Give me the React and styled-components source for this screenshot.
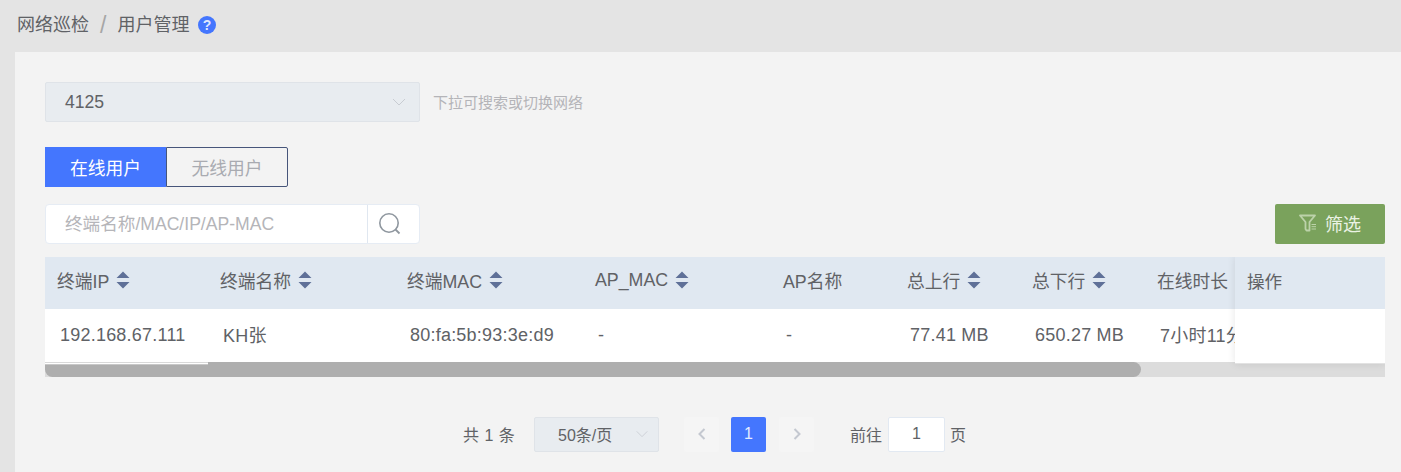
import React from "react";
import styled, { createGlobalStyle } from "styled-components";

const FONT = `"Liberation Sans", "Noto Sans CJK SC", sans-serif`;

const Global = createGlobalStyle`
  html, body { margin: 0; padding: 0; background: #e4e4e4; }
  body { font-family: ${FONT}; color: #606266; overflow: hidden; }
  * { box-sizing: border-box; }
`;

const Page = styled.div`
  width: 1401px;
  height: 472px;
  display: flex;
  flex-direction: column;
  overflow: hidden;
`;

const Crumbs = styled.header`
  height: 52px;
  flex: none;
  padding-left: 17px;
  padding-bottom: 7px;
  display: flex;
  align-items: center;
  font-size: 18px;
  color: #606266;
`;

const Slash = styled.span`
  margin: 5px 11px 0;
  font-size: 23px;
  line-height: 1;
  color: #a6a6a6;
  font-weight: 400;
`;

const HelpIcon = styled.svg`
  width: 18px;
  height: 18px;
  margin: 5px 0 0 9px;
`;

const Main = styled.main`
  flex: 1;
  margin-left: 15px;
  background: #f3f3f3;
  padding: 30px 16px 0 30px;
`;

const SelectRow = styled.div`
  display: flex;
  align-items: center;
  gap: 13px;
`;

const Select = styled.div`
  width: ${(p) => p.$w}px;
  height: ${(p) => p.$h}px;
  background: #e8ecf0;
  border: 1px solid #dfe3e8;
  border-radius: 2px;
  padding-left: ${(p) => p.$pad}px;
  padding-right: ${(p) => p.$right}px;
  display: flex;
  align-items: center;
  justify-content: space-between;
  font-size: ${(p) => p.$fs}px;
  color: #606266;
`;

const Hint = styled.span`
  font-size: 15px;
  padding-bottom: 2px;
  color: #b4b4b8;
`;

const Tabs = styled.div`
  display: flex;
  margin-top: 25px;
`;

const Tab = styled.div`
  width: ${(p) => (p.$active ? 121 : 122)}px;
  height: 40px;
  display: flex;
  align-items: center;
  justify-content: center;
  font-size: 17.8px;
  color: ${(p) => (p.$active ? "#ffffff" : "#a9abb1")};
  background: ${(p) => (p.$active ? "#4476fe" : "transparent")};
  border: ${(p) => (p.$active ? "none" : "1px solid #46557a")};
  border-radius: ${(p) => (p.$active ? "0" : "0 2px 2px 0")};
`;

const Toolbar = styled.div`
  margin-top: 17px;
  display: flex;
  justify-content: space-between;
  align-items: flex-start;
`;

const Search = styled.div`
  width: 375px;
  height: 40px;
  display: flex;
  background: #fff;
  border: 1px solid #e6ecf4;
  border-radius: 4px;
`;

const SearchText = styled.div`
  flex: 1;
  padding: 0 0 4px 19px;
  display: flex;
  align-items: center;
  font-size: 17.6px;
  color: #b5b5b9;
  border-right: 1px solid #e0e7f0;
`;

const SearchBtn = styled.div`
  width: 51px;
  padding-left: 11px;
  display: flex;
  align-items: center;
`;

const FilterBtn = styled.div`
  width: 110px;
  height: 40px;
  background: #7aa25c;
  border-radius: 2px;
  padding-bottom: 2px;
  display: flex;
  align-items: center;
  justify-content: center;
  gap: 8px;
  font-size: 18px;
  color: #eaf2e4;
`;

const TableWrap = styled.div`
  position: relative;
  margin-top: 13px;
  width: 1340px;
  height: 120px;
  overflow: hidden;
`;

const Row = styled.div`
  display: flex;
  width: 1340px;
  height: ${(p) => p.$h}px;
  background: ${(p) => p.$bg};
`;

const HeadCell = styled.div`
  flex: none;
  width: ${(p) => p.$w}px;
  padding: 0 0 6px 12px;
  display: flex;
  align-items: center;
  gap: 7px;
  font-size: 17.8px;
  color: #606266;
  white-space: nowrap;
  overflow: hidden;
`;

const BodyCell = styled.div`
  flex: none;
  width: ${(p) => p.$w}px;
  padding: 0 0 ${(p) => (p.$cjk ? 3 : 0)}px 15px;
  display: flex;
  align-items: center;
  font-size: 18px;
  letter-spacing: 0.22px;
  color: #606266;
  white-space: nowrap;
  overflow: hidden;
`;

const Scrollbar = styled.div`
  height: 15px;
  background: #dcdcdc;
`;

const Thumb = styled.div`
  width: 1096px;
  height: 15px;
  background: #aeaeae;
  border-radius: 0 8px 8px 8px;
`;

const FixedRight = styled.div`
  position: absolute;
  top: 0;
  right: 0;
  width: 150px;
  height: 107px;
  box-shadow: 0 0 8px rgba(0, 0, 0, 0.1);
  border-bottom: 1px solid #e2e2e2;
`;

const FixedHead = styled.div`
  height: 52px;
  background: #e0e8f1;
  padding: 0 0 6px 12px;
  display: flex;
  align-items: center;
  font-size: 17.6px;
  color: #606266;
`;

const FixedBody = styled.div`
  height: 54px;
  background: #fff;
`;

const LeftEdge = styled.div`
  position: absolute;
  left: 0;
  top: 105px;
  width: 163px;
  height: 3px;
  background: #fff;
  border-top: 1px solid #d9d9d9;
  border-bottom: 1px solid #c8c8c8;
`;

const Pager = styled.div`
  margin-top: 39px;
  display: flex;
  align-items: center;
  height: 36px;
  padding-left: 418px;
  font-size: 16px;
  color: #606266;
`;

const Total = styled.span`
  width: 71px;
  letter-spacing: 0.5px;
`;

const PageBtn = styled.div`
  width: 35px;
  height: 35px;
  margin-left: ${(p) => p.$ml}px;
  border-radius: 2px;
  display: flex;
  align-items: center;
  justify-content: center;
  background: ${(p) => (p.$active ? "#4476fe" : "#f5f5f5")};
  color: #e4ebff;
  font-size: 16px;
`;

const GoLabel = styled.span`
  margin-left: ${(p) => p.$ml}px;
`;

const GoInput = styled.div`
  width: 57px;
  height: 35px;
  margin: 0 5px 0 6px;
  background: #fff;
  border: 1px solid #e2e9f2;
  border-radius: 2px;
  display: flex;
  align-items: center;
  justify-content: center;
  font-size: 16px;
`;

const Chevron = ({ size = 16, color = "#c8ccd2" }) => (
  <svg width={size} height={size} viewBox="0 0 16 16" fill="none">
    <path d="M2 5 L8 11 L14 5" stroke={color} strokeWidth="1" />
  </svg>
);

const Arrow = ({ left }) => (
  <svg width="12" height="14" viewBox="0 0 12 14" fill="none">
    <path d={left ? "M8.5 2 L3.5 7 L8.5 12" : "M3.5 2 L8.5 7 L3.5 12"} stroke="#c4c8d0" strokeWidth="2" />
  </svg>
);

const Sort = () => (
  <svg width="14" height="18" viewBox="0 0 14 18" style={{ flex: "none" }}>
    <path d="M7 0.5 L13.5 7 L0.5 7 Z M0.5 11 L13.5 11 L7 17.5 Z" fill="#5f7098" />
  </svg>
);

const heads = [
  ["终端IP", 163, true],
  ["终端名称", 187, true],
  ["终端MAC", 188, true],
  ["AP_MAC", 188, true],
  ["AP名称", 124, false],
  ["总上行", 125, true],
  ["总下行", 125, true],
  ["在线时长", 125, false],
];
const cells = [
  ["192.168.67.111", false],
  ["KH张", true],
  ["80:fa:5b:93:3e:d9", false],
  ["-", false],
  ["-", false],
  ["77.41 MB", false],
  ["650.27 MB", false],
  ["7小时11分", true],
];

export default function App() {
  return (
    <Page>
      <Global />
      <Crumbs>
        网络巡检<Slash>/</Slash>用户管理
        <HelpIcon viewBox="0 0 18 18">
          <circle cx="9" cy="9" r="9" fill="#4476fe" />
          <text x="9" y="14" textAnchor="middle" fontSize="14" fontWeight="700" fontFamily="Liberation Sans" fill="#dfe8ff">?</text>
        </HelpIcon>
      </Crumbs>
      <Main>
        <SelectRow>
          <Select $w={375} $h={40} $pad={19} $right={12} $fs={17.6}>
            4125
            <Chevron />
          </Select>
          <Hint>下拉可搜索或切换网络</Hint>
        </SelectRow>
        <Tabs>
          <Tab $active>在线用户</Tab>
          <Tab>无线用户</Tab>
        </Tabs>
        <Toolbar>
          <Search>
            <SearchText>终端名称/MAC/IP/AP-MAC</SearchText>
            <SearchBtn>
              <svg width="22" height="22" viewBox="0 0 22 22" fill="none">
                <circle cx="10" cy="10" r="9.2" stroke="#8f979f" strokeWidth="1.6" />
                <path d="M16.5 16.5 L20.5 20.5" stroke="#8f979f" strokeWidth="1.8" />
              </svg>
            </SearchBtn>
          </Search>
          <FilterBtn>
            <svg width="18" height="18" viewBox="0 0 18 18" fill="none" strokeLinejoin="round">
              <path d="M1 1.5 H16 L10.5 8 V16.5 H7.5 L6.5 15 V8 Z" stroke="#bcd2aa" strokeWidth="1.8" />
              <path d="M12.5 10.5 H17 M12.5 12.7 H17 M12.5 15 H17" stroke="#bcd2aa" strokeWidth="1" />
            </svg>
            筛选
          </FilterBtn>
        </Toolbar>
        <TableWrap>
          <Row $h={52} $bg="#e0e8f1">
            {heads.map(([t, w, s]) => (
              <HeadCell key={t} $w={w}>
                {t}
                {s && <Sort />}
              </HeadCell>
            ))}
          </Row>
          <Row $h={53} $bg="#fff">
            {cells.map(([c, cjk], i) => (
              <BodyCell key={i} $w={heads[i][1]} $cjk={cjk}>{c}</BodyCell>
            ))}
          </Row>
          <Scrollbar>
            <Thumb />
          </Scrollbar>
          <LeftEdge />
          <FixedRight>
            <FixedHead>操作</FixedHead>
            <FixedBody />
          </FixedRight>
        </TableWrap>
        <Pager>
          <Total>共 1 条</Total>
          <Select $w={125} $h={35} $pad={23} $right={9} $fs={16}>
            50条/页
            <Chevron size={14} />
          </Select>
          <PageBtn $ml={25}><Arrow left /></PageBtn>
          <PageBtn $ml={12} $active>1</PageBtn>
          <PageBtn $ml={13}><Arrow /></PageBtn>
          <GoLabel $ml={36}>前往</GoLabel>
          <GoInput>1</GoInput>
          <span>页</span>
        </Pager>
      </Main>
    </Page>
  );
}
